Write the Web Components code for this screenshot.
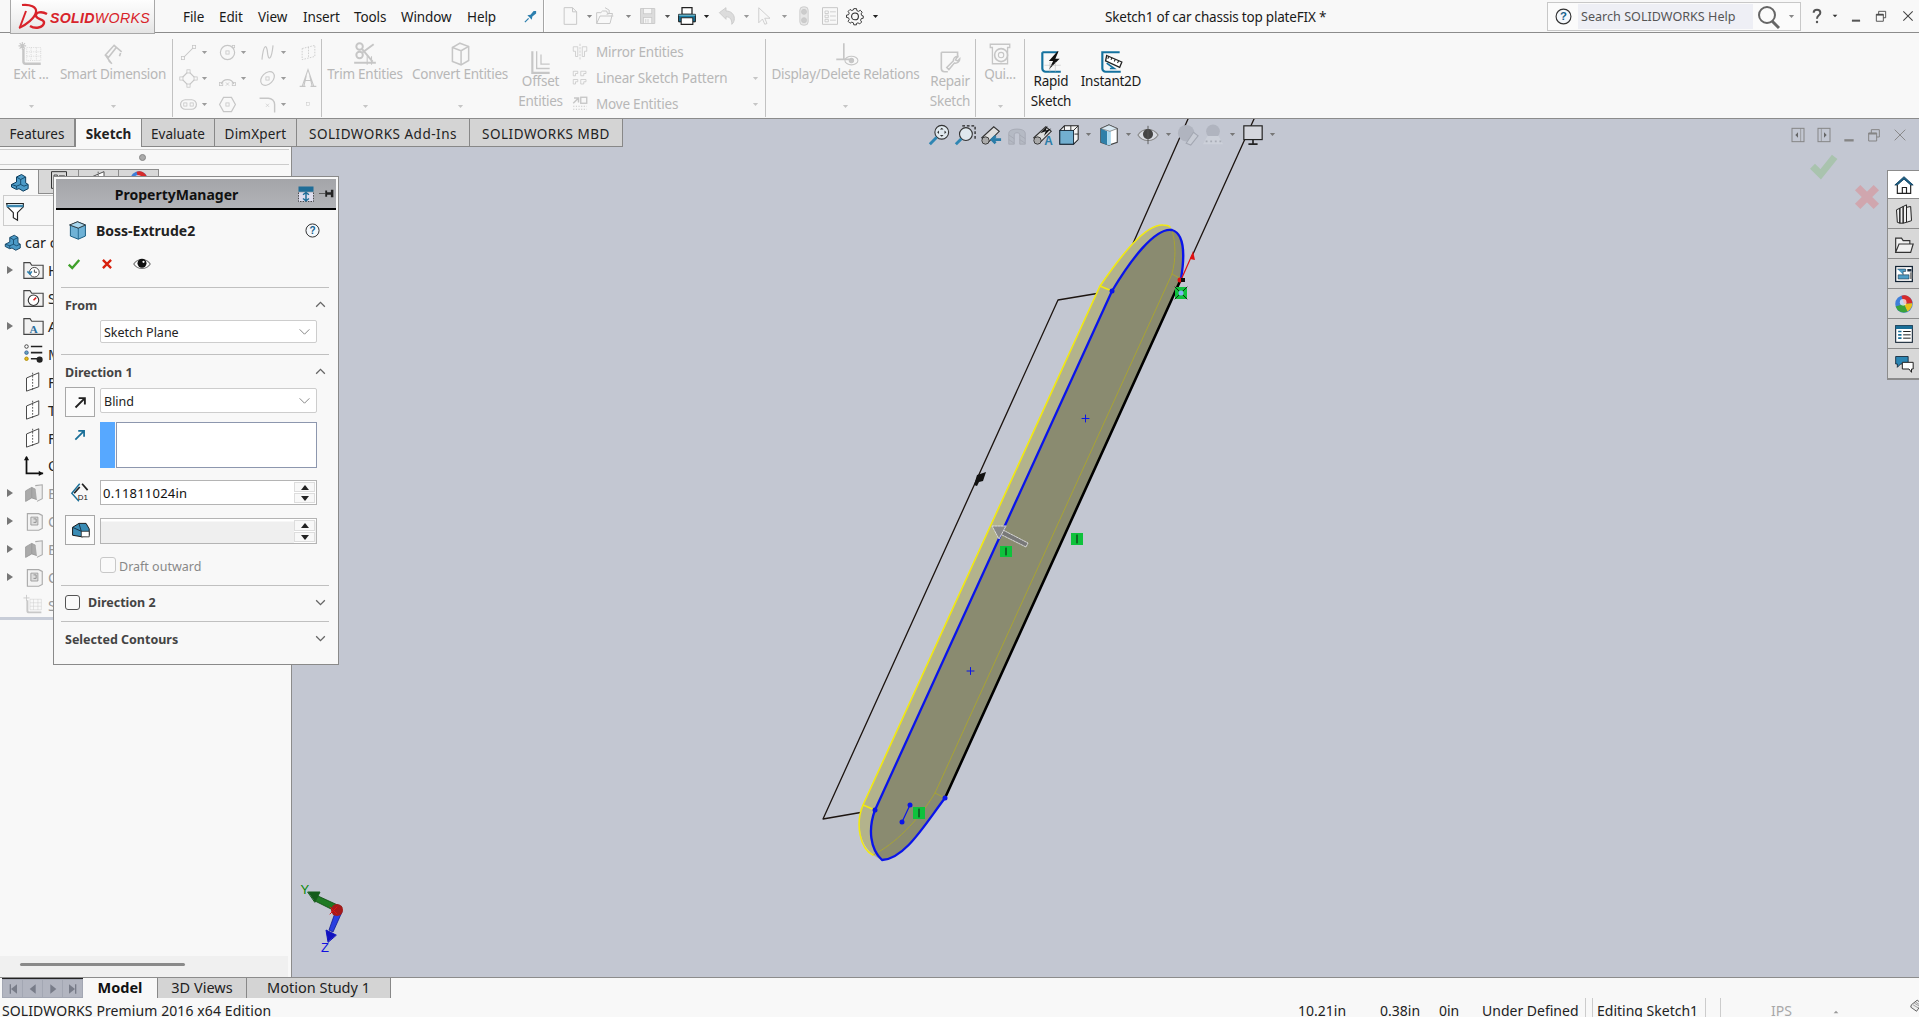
<!DOCTYPE html>
<html lang="en"><head><meta charset="utf-8"><title>SOLIDWORKS</title>
<style>
html,body{margin:0;padding:0;width:1919px;height:1017px;overflow:hidden;background:#f8f8f8}
body{font-family:"Noto Sans","Open Sans",sans-serif;font-size:13.5px;color:#222}
</style></head><body>
<sw-app></sw-app>
<script>
const D='#c6c6c6';
const ICONS={
caret:'<path d="M5 8h14l-7 8z" fill="currentColor" stroke="none"/>',
chevdown:'<path d="M4 8l8 8 8-8" stroke-width="2.4"/>',
chevup:'<path d="M4 16l8-8 8 8" stroke-width="2.4"/>',
chevthin:'<path d="M3 8l9 9 9-9" stroke-width="1.3"/>',
exit:'<path d="M5 7v12a2 2 0 0 0 2 2h14" stroke-width="2.2"/><path d="M8 6h13v12H8zM12 6v12M17 6v12M8 10h13M8 14h13" stroke-width=".5" stroke-dasharray="1 1"/><path d="M4 1v7M.5 4.500h7M1.500 2l5 5M6.500 2l-5 5" stroke-width="1"/>',
smart:'<path d="M5 13l8-9 2 2-7 9zM13 4l7 6M5 13l5 7" stroke-width="1.500"/><path d="M11 21l-3-3M19 11l-1 3" stroke-width="1.500"/>',
line:'<path d="M6 18L18 6" stroke-width="1.300"/><rect x="3" y="17" width="4" height="4"/><rect x="17" y="3" width="4" height="4"/>',
circle:'<circle cx="12" cy="12" r="9" stroke-width="1.500"/><rect x="10" y="10" width="4" height="4"/><rect x="18" y="3" width="3" height="3"/>',
spline:'<path d="M5 21C7 1 11 1 12 12s5 10 7-9" stroke-width="1.500"/>',
plane:'<path d="M4 7l16-4v14L4 21z" stroke-dasharray="2 1.500"/><path d="M12 5v14" stroke-dasharray="2 1.500"/>',
rect:'<path d="M3 12l9-9 9 9-9 9z" stroke-width="1.400"/><rect x="1" y="10" width="4" height="4" fill="#f8f8f8"/><rect x="19" y="10" width="4" height="4" fill="#f8f8f8"/><rect x="10" y="1" width="4" height="4" fill="#f8f8f8"/><rect x="10" y="19" width="4" height="4" fill="#f8f8f8"/>',
arc:'<path d="M4 19a8.500 8.500 0 0 1 16 0" stroke-width="1.500"/><rect x="2" y="17" width="4" height="4"/><rect x="18" y="17" width="4" height="4"/><path d="M10 17l4 4M14 17l-4 4"/>',
ellipse:'<ellipse cx="12" cy="12" rx="10" ry="7" transform="rotate(-45 12 12)" stroke-width="1.500"/><rect x="10" y="10" width="4" height="4"/>',
textA:'<path d="M2 22h7M15 22h7M5 22L12 2l7 20M8 15h8M10 9l-3 13M14 9l3 13" stroke-width="1.300"/>',
slot:'<rect x="2" y="6" width="20" height="12" rx="6" stroke-width="1.500"/><rect x="6" y="10" width="4" height="4"/><rect x="14" y="10" width="4" height="4"/>',
polygon:'<path d="M7 3h10l5 9-5 9H7l-5-9z" stroke-width="1.500"/><rect x="10" y="10" width="4" height="4"/>',
fillet:'<path d="M2 4h11a8 8 0 0 1 8 8v10" stroke-width="1.800"/><path d="M10 11l4 4M14 11l-4 4" stroke-width=".8"/>',
point:'<rect x="8" y="8" width="8" height="8" stroke-width="1.500"/>',
trim:'<circle cx="7" cy="5" r="3" stroke-width="1.800"/><circle cx="7" cy="13" r="3" stroke-width="1.800"/><path d="M9 7l10 12M9 11L20 3M2 20h20" stroke-width="1.800"/><path d="M14 14v8M18 14v8" stroke-width="1"/>',
convert:'<path d="M12 2l8 3v13l-7 4-8-3V6z" stroke-width="1.400"/><path d="M5 6l8 3v13M13 9l7-4" stroke-width="1.400"/>',
offset:'<path d="M4 2v20h16" stroke-width="2"/><path d="M8 2v16h12M12 5v9h8" stroke-width="1.200"/>',
mirror:'<path d="M12 1v22" stroke-dasharray="3 1.500"/><path d="M9 5H3v6h3v7h3zM15 5h6v6h-3v7h-3z"/>',
pattern:'<path d="M3 3h6v3H6v3H3zM13 3h7v3h-3v3h-4zM3 14h6v3H6v3H3zM13 14h7v3h-3v3h-4z"/>',
move:'<path d="M3 11l7-7M4 4h6v6" stroke-width="2"/><rect x="13" y="3" width="8" height="8" stroke-width="1.800"/><path d="M3 15h18M3 19h18" stroke-width="1.500" stroke-dasharray="1.500 2"/>',
relations:'<path d="M10 2v15M3 17h12" stroke-width="1.500"/><ellipse cx="17" cy="18" rx="6" ry="4"/><circle cx="17" cy="18" r="2" fill="currentColor"/>',
repair:'<path d="M4 3h15v5M4 3v15a3 3 0 0 0 3 3h3" stroke-width="1.500"/><path d="M21 9a4 4 0 0 1-5 4l-5 6-2-2 6-6a4 4 0 0 1 4-4l-2 3 2 1z" stroke-width="1.400"/>',
quick:'<path d="M3 3h18v3h-2v15H5V6H3z" stroke-width="1.200"/><circle cx="13" cy="13" r="6" stroke-width="1.500"/><circle cx="13" cy="13" r="2.500"/>',
rapid:'<path d="M4 3h14M4 3v15a3 3 0 0 0 3 3h14" stroke="#14719e" stroke-width="2"/><path d="M18 2l-8 9h4l-4 8 10-10h-4l3-7z" fill="#111" stroke="none"/><path d="M6 15h15M11 12v9M16 12v9" stroke="#bbb" stroke-width=".5"/>',
instant:'<path d="M20 3H4v15a3 3 0 0 0 3 3h14" stroke="#14719e" stroke-width="2"/><path d="M8 6l14 6-2 5-13-6z" fill="#fff" stroke="#222" stroke-width="1.200"/><path d="M10 7l-1 2M13 8l-1 2M16 9.500l-1 2M19 11l-1 2" stroke="#222" stroke-width="1"/><path d="M8 13l7 5h-4" stroke="#14719e" stroke-width="1.500"/>',
newdoc:'<path d="M5 2h10l5 5v15H5z" stroke-width="1.200"/><path d="M15 2v5h5" stroke-width="1.200"/>',
open:'<path d="M2 21V8h5l2-2h5l1 3h6l-3 12z" stroke-width="1.200"/><path d="M2 21l4-9h16" stroke-width="1.200"/><path d="M12 2l5 3v4l-3 1" stroke-width="1.200"/>',
save:'<path d="M2 2h19v20H2z" fill="#dcdcdc" stroke-width="1.200"/><rect x="6" y="2" width="11" height="7" fill="#f6f6f6"/><rect x="6" y="14" width="11" height="8" fill="#f6f6f6"/><path d="M9 16v5M12 16v5"/>',
print:'<path d="M6 2h12v8H6z" fill="#fff" stroke="#222" stroke-width="1.500"/><path d="M2 10h20v9H2z" fill="#1a7fa8" stroke="#111" stroke-width="1.200"/><path d="M5 14h14v8H5z" fill="#fff" stroke="#222" stroke-width="1.300"/><path d="M2 11h20" stroke="#7bc" stroke-width="1.500"/>',
undo:'<path d="M4 8l8-6v4c6 0 10 4 10 9 0 3-1 5-3 7 0-6-2-9-7-9v3z" fill="#dcdcdc" stroke-width="1"/>',
cursor:'<path d="M5 1v20l5-5 3 7 3-1-3-7h7z" stroke-width="1.100"/>',
traffic:'<rect x="7" y="1" width="10" height="22" rx="4" fill="#e6e6e6" stroke-width="1"/><circle cx="12" cy="7" r="3" fill="#ccc"/><circle cx="12" cy="17" r="3" fill="#ccc"/>',
optlist:'<path d="M3 2h18v20H3z" stroke-width="1.200"/><path d="M6 6h4v3H6zM6 11h4v3H6zM6 16h4v3H6zM12 7h7M12 12h7M12 17h7" stroke-width="1"/>',
gear:'<path d="M10 2h4l.6 3 2.400 1 2.600-1.600 2.800 2.800L20.800 9.800l1 2.400 2.200.6v3.400l-3 .6-1 2.400 1.600 2.600-2.800 2.800-2.600-1.600-2.400 1L14 26h-4l-.6-3-2.400-1-2.600 1.600-2.800-2.800L3.200 18l-1-2.400L-.8 15v-3.400l3-.6 1-2.400L1.600 6l2.800-2.800L7 4.800l2.400-1z" transform="translate(1.400 .4) scale(.9)" stroke="#222" stroke-width="1.300"/><circle cx="12" cy="12.500" r="4.500" stroke="#222" stroke-width="1.400"/>',
help:'<circle cx="12" cy="12" r="10.500" stroke="#333" stroke-width="1.600" fill="#f4f8fc"/><text x="12" y="17.500" font-size="16" font-weight="700" text-anchor="middle" fill="#14618e" stroke="none" font-family="Liberation Sans">?</text>',
search:'<circle cx="10" cy="10" r="8" stroke="#666" stroke-width="2"/><path d="M15 16l7 7" stroke="#666" stroke-width="3"/>',
qmark:'<path d="M7 7c0-6 10-6 10 0 0 4-5 4-5 9" stroke="#555" stroke-width="3"/><circle cx="12" cy="21" r="1.800" fill="#555" stroke="none"/>',
pin:'<path d="M21 3l-4 0 0 0-5 6-5 1 7 7 1-5 6-5z" fill="#2d7fae" stroke="none"/><path d="M3 21l6-6" stroke="#2d7fae" stroke-width="2"/>',
part:'<path d="M3 15l6-3V6l6-3 5 3v7l3 2v5l-6 3-5-3-3 1-6-3z" fill="#4b9ac7" stroke="#0e3e5e" stroke-width="1.200"/><path d="M9 6l5 3 6-3M14 9v6M3 15l6 2 5-2 4 2 5-2M9 17v3" stroke="#0e3e5e" stroke-width="1"/>',
filter:'<path d="M2 3h20v4l-7 7v9l-5-3v-6L3 7z" fill="#fff" stroke="#222" stroke-width="1.400"/><path d="M2 6h20" stroke="#3e88b0" stroke-width="3"/>',
hist:'<path d="M1 21V3h7l2 3h13v15z" fill="#f2f2f2" stroke="#444" stroke-width="1.300"/><circle cx="13" cy="14" r="5.500" fill="#fff" stroke="#333"/><path d="M13 11v3h3" stroke="#333"/><path d="M5 13l3 3 2-3" stroke="#2a80b0" stroke-width="1.800"/>',
sensor:'<path d="M1 21V3h7l2 3h13v15z" fill="#f2f2f2" stroke="#444" stroke-width="1.300"/><circle cx="12" cy="14" r="6" fill="#fff" stroke="#333" stroke-width="1.300"/><path d="M12 14l3-3" stroke="#d22" stroke-width="1.800"/>',
annot:'<path d="M1 21V3h7l2 3h13v15z" fill="#f2f2f2" stroke="#444" stroke-width="1.300"/><text x="12" y="19" font-size="13" font-weight="700" font-family="Liberation Serif" text-anchor="middle" fill="#2a6fa0" stroke="none">A</text>',
material:'<circle cx="4" cy="4" r="2" fill="#fff" stroke="#333"/><circle cx="4" cy="11" r="2" fill="#6ab" stroke="#359"/><circle cx="4" cy="18" r="2" fill="#e5b820" stroke="#a80"/><path d="M9 4h13M9 11h13M9 18h7" stroke="#222" stroke-width="1.800"/><circle cx="19" cy="19" r="3.500" fill="#222" stroke="none"/>',
plane2:'<path d="M4 8l14-6v16L4 23z" stroke="#444" stroke-width="1.100" fill="#fff"/><path d="M11 2v21" stroke="#444" stroke-dasharray="2 1.500"/>',
origin:'<path d="M4 2v19h19" stroke="#111" stroke-width="2"/><path d="M1 6l3-5 3 5zM18 18l5 3-5 3z" fill="#111" stroke="none"/>',
boss:'<path d="M3 9l7-4v12l-7 4zM10 5l6 3v11l-6-2" fill="#aaa" stroke="#999"/><path d="M14 3l8-1v16l-6 3" fill="#eee" stroke="#aaa" stroke-width="1.200"/>',
cut:'<path d="M5 3h13l4 2v15l-4 2H5z" fill="#f3f3f3" stroke="#aaa" stroke-width="1.300"/><path d="M9 7h8v9H9z" fill="#ddd" stroke="#999"/><path d="M12 9h3v4h-3" stroke="#888"/>',
sketch:'<path d="M5 7v12a2 2 0 0 0 2 2h14" stroke="#c8c8c8" stroke-width="2.200"/><path d="M8 6h13v12H8zM12 6v12M17 6v12M8 10h13M8 14h13" stroke="#c8c8c8" stroke-width=".5"/><path d="M4 1v7M.5 4.500h7" stroke="#c8c8c8"/>',
cube:'<path d="M12 1l10 4v14l-9 4-10-4V5z" fill="#6fb2d6" stroke="#145a80" stroke-width="1.200"/><path d="M2 5l11 4v14M13 9l9-4" stroke="#145a80" stroke-width="1"/><path d="M2 5l10-4 10 4-9 4z" fill="#a9d7ee"/>',
ok:'<path d="M3 13l6 6L21 5" stroke="#3fa02a" stroke-width="4"/>',
no:'<path d="M5 5l14 14M19 5L5 19" stroke="#d8200c" stroke-width="4"/>',
eye:'<path d="M1 12C6 4 18 4 23 12 18 20 6 20 1 12z" fill="#fff" stroke="#777" stroke-width="1.500"/><circle cx="12" cy="11" r="6" fill="#111" stroke="none"/><circle cx="14" cy="9" r="1.500" fill="#fff" stroke="none"/>',
pmdisplay:'<rect x="2" y="2" width="20" height="7" fill="#1f6d97" stroke="none"/><path d="M2 10v12h20V10" stroke="#222" stroke-dasharray="2 1.500" fill="#dde"/><path d="M12 10v11M8 13l4-3 4 3M8 18l4 3 4-3" stroke="#1f6d97" stroke-width="2"/>',
pushpin:'<path d="M0 12h10" stroke="#555" stroke-width="1.500"/><path d="M10 7h3v3h6V6h4v12h-4v-4h-6v3h-3z" fill="#222" stroke="none"/>',
revdir:'<path d="M4 20L19 5M9 5h10v10" stroke="#222" stroke-width="3"/>',
revdis:'<path d="M20 4L6 18M15 18H6V9" stroke="#c9c9c9" stroke-width="3"/>',
dirarrow:'<path d="M4 20L19 5M9 5h10v10" stroke="#1a6f98" stroke-width="3"/>',
depth:'<path d="M11 1L1 13l9 10" stroke="#1a6f98" stroke-width="1.800"/><path d="M4 13L11 5M14 1l7 8" stroke="#222" stroke-width="2.200"/><text x="15" y="21" font-size="10" text-anchor="middle" fill="#111" stroke="none" font-family="Liberation Sans">D1</text>',
draft:'<path d="M2 8l8-5h9l4 7v8l-9 2-12-2z" fill="#3a8cb5" stroke="#111" stroke-width="1.200"/><path d="M13 13h10v7H13z" fill="#fff" stroke="#222"/><path d="M10 3l3 10M2 8l11 5" stroke="#123" stroke-width="1"/>',
zoomfit:'<circle cx="15" cy="9" r="7.500" fill="#dfe8ee" stroke="#333" stroke-width="1.200"/><path d="M9.500 14.500L2 22" stroke="#2f86b3" stroke-width="3.200"/><path d="M15 4l-2 2h4zM15 14l-2-2h4zM10 9l2-2v4zM20 9l-2-2v4z" fill="#333" stroke="none"/>',
zoomarea:'<path d="M9 2h14v14" stroke="#222" stroke-dasharray="3 2" stroke-width="1.400"/><circle cx="13" cy="11" r="7" fill="#dfe8ee" stroke="#333" stroke-width="1.200"/><path d="M8 16l-6 6" stroke="#2f86b3" stroke-width="3.200"/>',
prevview:'<path d="M2 15L15 3l6 5-11 11z" fill="#ddd" stroke="#333" stroke-width="1.200"/><circle cx="6" cy="18" r="4" fill="#aaa" stroke="#333"/><path d="M23 17H13M17 13l-4 4 4 4" stroke="#2a7ca8" stroke-width="3"/>',
section:'<path d="M3 10c0-6 18-6 18 0v12h-6V11c0-2-6-2-6 0v11H3z" fill="#b5bac4" stroke="#a6aab5"/><path d="M3 12l6 4M3 17l6 4M15 12l6 4M15 17l6 4" stroke="#a6aab5"/>',
dynannot:'<path d="M2 15L15 3l6 5-11 11z" fill="#ddd" stroke="#333" stroke-width="1.200"/><circle cx="6" cy="18" r="4" fill="#aaa" stroke="#333"/><path d="M9 10l8-8-2 5 6-2-8 8 2-5z" fill="#111" stroke="none"/><text x="18" y="23" font-size="13" fill="#2a7ca8" stroke="none" font-family="Liberation Sans" font-weight="700" text-anchor="middle">A</text>',
orient:'<path d="M7 2h15v15l-5 5H2V7z" fill="#f5f5f5" stroke="#222" stroke-width="1.100"/><rect x="2" y="7" width="15" height="15" fill="#72afd0" stroke="#123"/><path d="M7 2v5M22 2l-5 5M14 2v5M18 11h4" stroke="#222"/>',
dispstyle:'<path d="M12 1l9 4v15l-9 3-9-3V5z" fill="#fff" stroke="#444" stroke-width="1.200"/><path d="M3 5l7 3v15l-7-3z" fill="#2f7fa8" stroke="none"/><path d="M10 8h4v15h-4z" fill="#a8d6ec" stroke="none"/><path d="M3 5l9-4 9 4-8 3z" fill="#d8e8f2" stroke="#444" stroke-width=".6"/>',
hideshow:'<path d="M1 12C6 4 18 4 23 12 18 20 6 20 1 12z" fill="#d8dbe2" stroke="#888" stroke-width="1.200"/><circle cx="12" cy="11" r="5.500" fill="#444" stroke="none"/><path d="M12 2v20" stroke="#555"/>',
appear:'<circle cx="10" cy="10" r="9" fill="#b0b4bf" stroke="none"/><path d="M10 21l8-12 5 4-8 10z" fill="#c8ccd5" stroke="#a3a7b2" stroke-width="1.200"/>',
scene:'<circle cx="12" cy="8" r="7.500" fill="#b0b4bf" stroke="none"/><path d="M1 22l5-9h12l5 9z" fill="#ccd0d9" stroke="none"/><path d="M4 18h2v2H4zM9 18h2v2H9zM14 18h2v2h-2zM19 18h2v2h-2z" fill="#a8acb6" stroke="none"/>',
monitor:'<rect x="2" y="2" width="20" height="15" fill="#d4d6dd" stroke="#222" stroke-width="1.300"/><path d="M12 17v4M7 22h10" stroke="#222" stroke-width="1.800"/>',
lpane:'<rect x="3" y="2" width="18" height="20" stroke="#858585" stroke-width="1.500"/><path d="M16 2v20" stroke="#858585"/><path d="M12 8v8l-4-4z" fill="#666" stroke="none"/>',
rpane:'<rect x="3" y="2" width="18" height="20" stroke="#858585" stroke-width="1.500"/><path d="M8 2v20" stroke="#858585"/><path d="M12 8v8l4-4z" fill="#666" stroke="none"/>',
vmin:'<path d="M5 20h14" stroke="#858585" stroke-width="3.500"/>',
vrest:'<path d="M4 9h12v12H4z" stroke="#858585" stroke-width="1.500"/><path d="M8 9V4h12v11h-4" stroke="#858585" stroke-width="1.500"/><path d="M4 10h12" stroke="#858585" stroke-width="2.500"/>',
vclose:'<path d="M4 4l16 16M20 4L4 20" stroke="#858585" stroke-width="1.400"/>',
wmin:'<path d="M5 20h14" stroke="#555" stroke-width="3.500"/>',
wrest:'<path d="M4 9h12v12H4z" stroke="#444" stroke-width="1.500"/><path d="M8 9V4h12v11h-4" stroke="#444" stroke-width="1.500"/><path d="M4 10h12" stroke="#444" stroke-width="2.500"/>',
wclose:'<path d="M4 4l16 16M20 4L4 20" stroke="#444" stroke-width="1.800"/>',
okbig:'<path d="M3 13l7 7L22 5" stroke="#a9c3ae" stroke-width="6"/>',
nobig:'<path d="M4 4l16 16M20 4L4 20" stroke="#d0a6ae" stroke-width="6.500"/>',
home:'<path d="M1 12L12 2l11 10-3 0L12 5 4 12z" fill="#1a5f85" stroke="#0e3e5e"/><path d="M4 12v10h16V12" stroke="#222" stroke-width="1.400" fill="#fff"/><path d="M10 22v-7h5v7" stroke="#222" stroke-width="1.400"/>',
library:'<path d="M3 7l4-2v18l-3-1zM7 5l4-2v20l-4 0zM11 3l4-2v21l-4 1zM15 4l5-1 1 17-6 2" fill="#eee" stroke="#222" stroke-width="1.200"/>',
folder:'<path d="M2 22V5h7l2 3h8v4H6l-4 10h18l3-10H6" fill="#f0f0f0" stroke="#333" stroke-width="1.400"/>',
board:'<rect x="2" y="3" width="20" height="18" fill="#fff" stroke="#123" stroke-width="1.500"/><path d="M4 6h10v3h-3v4h7v5H5v-5h6" fill="#4e9dc6" stroke="#123" stroke-width=".6"/><rect x="16" y="6" width="5" height="3" fill="#234" stroke="none"/><rect x="19" y="10" width="3" height="8" fill="#888" stroke="none"/>',
ball:'<circle cx="12" cy="12" r="10.500" fill="#3f7fd8" stroke="none"/><path d="M12 12L22 11A10 10 0 0 0 9 2z" fill="#d62b2b" stroke="none"/><path d="M12 12l10-1c0 5-3 8-6 10z" fill="#e9c21b" stroke="none"/><path d="M12 12l4 9a10 10 0 0 1-14-6z" fill="#3aa33a" stroke="none"/><circle cx="11" cy="10" r="4" fill="#fff" opacity=".7" stroke="none"/>',
props:'<rect x="2" y="2" width="20" height="20" fill="#fff" stroke="#123" stroke-width="1.300"/><rect x="2" y="2" width="20" height="4" fill="#1a6f98" stroke="none"/><path d="M5 9h4M5 13h4M5 17h4" stroke="#1a6f98" stroke-width="2"/><path d="M11 9h9M11 13h9M11 17h9" stroke="#222" stroke-width="1.200"/>',
chat:'<path d="M2 3h15v9H8l-4 4v-4H2z" fill="#2c86b3" stroke="#123"/><path d="M10 10h13v8h-2v4l-3-4h-8z" fill="#fff" stroke="#222" stroke-width="1.200"/>',
wreckbox:'<path d="M4 10L14 2l8 6-9 13L3 14z" fill="#eee" stroke="#444" stroke-width="1.400"/><path d="M7 10l10 6M9 7l10 6M11 5l9 6" stroke="#666"/>',
navfirst:'<path d="M8 5v14" stroke="#787c88" stroke-width="2"/><path d="M18 5v14L9 12z" fill="#787c88" stroke="none"/>',
navprev:'<path d="M16 5v14L7 12z" fill="#787c88" stroke="none"/>',
navnext:'<path d="M8 5v14l9-7z" fill="#787c88" stroke="none"/>',
navlast:'<path d="M16 5v14" stroke="#787c88" stroke-width="2"/><path d="M6 5v14l9-7z" fill="#787c88" stroke="none"/>'
};
function def(name,css,html,init){
  const t=document.createElement('template');
  t.innerHTML='<style>'+css+'</style>'+html;
  customElements.define(name,class extends HTMLElement{
    constructor(){super();this.attachShadow({mode:'open'}).appendChild(t.content.cloneNode(true));}
    connectedCallback(){if(init)init.call(this,this.shadowRoot);}
  });
}
customElements.define('sw-icon',class extends HTMLElement{
  static get observedAttributes(){return ['name','size'];}
  constructor(){super();this.attachShadow({mode:'open'});}
  attributeChangedCallback(){this.draw();}
  connectedCallback(){this.draw();}
  draw(){
    const s=this.getAttribute('size')||24,n=this.getAttribute('name');
    this.shadowRoot.innerHTML='<style>:host{display:inline-flex;flex:none;align-items:center;justify-content:center;width:'+s+'px;height:'+s+'px}svg{display:block;overflow:visible}</style><svg width="'+s+'" height="'+s+'" viewBox="0 0 24 24" fill="none" stroke="currentColor" stroke-width="1">'+(ICONS[n]||'')+'</svg>';
  }
});
def('sw-cell',':host{display:flex;flex:none;align-items:center;justify-content:center;height:100%}','<slot></slot>');

def('sw-logo',`:host{display:flex;align-items:center;width:143px;height:35px;flex:none;box-sizing:content-box;background:linear-gradient(#fff,#f1f1f1 60%,#e4e4e4);border:1px solid #a8a8a8;border-top:0;z-index:3;position:relative}
svg{margin-left:5px;flex:none}
span{font:italic 14.2px "Liberation Sans",sans-serif;color:#d8232a;margin-left:2px;margin-top:5px;white-space:nowrap;letter-spacing:.3px}
b{font-weight:700}`,
`<svg width="32" height="28" viewBox="0 0 32 28" fill="none" stroke="#d8232a"><path d="M6 3C14 2 21 5 20 10C19 16 10 23 3 26" stroke-width="2.200"/><path d="M10 9L4 25" stroke-width="2"/><path d="M31 12C26 9 19 10 20 14C21 18 29 17 28 21C27 26 19 27 14 24" stroke-width="2.400"/></svg><span><b>SOLID</b>WORKS</span>`);

def('sw-titlebar',`:host{display:flex;align-items:center;height:32px;border-bottom:1px solid #8c8c8c;background:#f8f8f8;padding-left:10px;position:relative;font-size:13.5px;color:#1a1a1a}
.m{display:flex;margin-left:28px;align-self:center;padding-top:2px}.m span{display:block;white-space:nowrap;letter-spacing:-.1px}
.sep{width:1px;height:32px;background:#a6a6a6;box-shadow:1px 0 0 #fff;flex:none}
.q{display:flex;height:100%;flex:none}
.t{margin-left:218px;white-space:nowrap;letter-spacing:-.2px;padding-top:2px}
.r{margin-left:auto;width:372px;flex:none;display:flex;height:100%;align-items:center}
.sb{width:252px;height:27px;border:1px solid #c8c8c8;display:flex;align-items:center;flex:none;background:#fbfbfb;margin-top:1px}
.sb .f{width:175px;height:25px;background:#eeeff5;margin-left:0;line-height:26px;padding-left:3px;box-sizing:border-box;color:#555;font-size:12.6px;white-space:nowrap;flex:none}
`,
`<sw-logo></sw-logo>
<div class="m"><span style="width:36px">File</span><span style="width:39px">Edit</span><span style="width:45px">View</span><span style="width:51px">Insert</span><span style="width:47px">Tools</span><span style="width:66px">Window</span><span style="width:50px">Help</span></div>
<sw-cell style="width:26px"><sw-icon name="pin" size="15"></sw-icon></sw-cell>
<div class="sep"></div>
<div class="q" style="color:#c8c8c8">
<sw-cell style="width:11px"></sw-cell>
<sw-cell style="width:30px"><sw-icon name="newdoc" size="20"></sw-icon></sw-cell>
<sw-cell style="width:8px"><sw-icon name="caret" size="9" style="color:#888"></sw-icon></sw-cell>
<sw-cell style="width:24px"><sw-icon name="open" size="20"></sw-icon></sw-cell>
<sw-cell style="width:22px"><sw-icon name="caret" size="9" style="color:#888"></sw-icon></sw-cell>
<sw-cell style="width:18px"><sw-icon name="save" size="18"></sw-icon></sw-cell>
<sw-cell style="width:20px"><sw-icon name="caret" size="9" style="color:#555"></sw-icon></sw-cell>
<sw-cell style="width:20px"><sw-icon name="print" size="20"></sw-icon></sw-cell>
<sw-cell style="width:18px"><sw-icon name="caret" size="9" style="color:#222"></sw-icon></sw-cell>
<sw-cell style="width:22px"><sw-icon name="undo" size="20"></sw-icon></sw-cell>
<sw-cell style="width:18px"><sw-icon name="caret" size="9" style="color:#999"></sw-icon></sw-cell>
<sw-cell style="width:18px"><sw-icon name="cursor" size="18"></sw-icon></sw-cell>
<sw-cell style="width:22px"><sw-icon name="caret" size="9" style="color:#999"></sw-icon></sw-cell>
<sw-cell style="width:18px"><sw-icon name="traffic" size="20"></sw-icon></sw-cell>
<sw-cell style="width:34px"><sw-icon name="optlist" size="20"></sw-icon></sw-cell>
<sw-cell style="width:16px"><sw-icon name="gear" size="18"></sw-icon></sw-cell>
<sw-cell style="width:24px"><sw-icon name="caret" size="9" style="color:#222"></sw-icon></sw-cell>
</div>
<span class="t">Sketch1 of car chassis top plateFIX *</span>
<div class="r"><div class="sb"><sw-cell style="width:30px"><sw-icon name="help" size="17"></sw-icon></sw-cell><div class="f">Search SOLIDWORKS Help</div><sw-cell style="width:31px"><sw-icon name="search" size="24"></sw-icon></sw-cell><sw-cell style="width:14px"><sw-icon name="caret" size="9" style="color:#888"></sw-icon></sw-cell></div>
<sw-cell style="width:24px;margin-left:4px"><sw-icon name="qmark" size="16"></sw-icon></sw-cell><sw-cell style="width:12px"><sw-icon name="caret" size="8" style="color:#333"></sw-icon></sw-cell><sw-cell style="width:29px"><sw-icon name="wmin" size="14"></sw-icon></sw-cell><sw-cell style="width:22px"><sw-icon name="wrest" size="14"></sw-icon></sw-cell><sw-cell style="width:22px;margin-left:5px"><sw-icon name="wclose" size="14"></sw-icon></sw-cell></div>`);

def('sw-rb-btn',`:host{display:flex;flex:none;flex-direction:column;align-items:center;height:86px;box-sizing:border-box;padding-top:8px;color:#b7b7b7;font-size:13.5px;line-height:19px;text-align:center;white-space:nowrap;overflow:visible;letter-spacing:-.25px}
:host([two]){padding-top:16px;line-height:20px}
:host([active]){color:#1a1a1a}
sw-icon{color:${D}}
.l{margin-top:-2px}:host([two]) .l{margin-top:-4px}
.c{position:relative;margin-top:auto;margin-bottom:9px;color:#9c9c9c;height:8px;display:flex;align-items:center}`,
`<sw-icon></sw-icon><div class="l"><slot></slot></div><div class="c"></div>`,
function(r){const i=r.querySelector('sw-icon');i.setAttribute('name',this.getAttribute('icon'));i.setAttribute('size',this.getAttribute('size')||26);
 if(this.hasAttribute('caret')){r.querySelector('.c').innerHTML='<sw-icon name="caret" size="9"></sw-icon>';}});

def('sw-rb-sep',':host{display:block;flex:none;width:1px;height:78px;background:#c2c2c2;margin-top:6px}','');

def('sw-rb-row',`:host{display:flex;align-items:center;height:26px;color:#b7b7b7;font-size:13.5px;white-space:nowrap;letter-spacing:-.2px}
sw-icon{color:${D};margin-left:0}.w{width:22px;display:flex;justify-content:center;flex:none}.e{margin-left:5px}.c{margin-left:auto;margin-right:5px;color:#9c9c9c;display:flex}`,
`<div class="w"><sw-icon size="18"></sw-icon></div><span class="e"><slot></slot></span><div class="c"></div>`,
function(r){r.querySelector('sw-icon').setAttribute('name',this.getAttribute('icon'));if(this.hasAttribute('caret'))r.querySelector('.c').innerHTML='<sw-icon name="caret" size="9"></sw-icon>';});

def('sw-ribbon',`:host{display:flex;height:86px;background:#f8f8f8;border-bottom:1px solid #8c8c8c;box-sizing:content-box;overflow:hidden}
.g{display:grid;grid-template-columns:39px 40px 41px 24px;grid-auto-rows:26px;align-items:center;width:148px;flex:none;box-sizing:border-box;padding:6px 0 0 3px;color:${D}}
.g div{display:flex;align-items:center;height:26px}
.g sw-icon.k{color:#9c9c9c}
.g sw-icon.i{width:24px}
.col{width:196px;flex:none;padding-top:6px}`,
`<sw-rb-btn icon="exit" caret style="width:62px">Exit ...</sw-rb-btn>
<sw-rb-btn icon="smart" caret style="width:102px">Smart Dimension</sw-rb-btn>
<div style="width:8px;flex:none"></div><sw-rb-sep></sw-rb-sep>
<div class="g">
<div><sw-icon name="line" size="19" class="i"></sw-icon><sw-icon name="caret" size="9" class="k"></sw-icon></div>
<div><sw-icon name="circle" size="19" class="i"></sw-icon><sw-icon name="caret" size="9" class="k"></sw-icon></div>
<div><sw-icon name="spline" size="19" class="i"></sw-icon><sw-icon name="caret" size="9" class="k"></sw-icon></div>
<div><sw-icon name="plane" size="19" class="i"></sw-icon></div>
<div><sw-icon name="rect" size="19" class="i"></sw-icon><sw-icon name="caret" size="9" class="k"></sw-icon></div>
<div><sw-icon name="arc" size="19" class="i"></sw-icon><sw-icon name="caret" size="9" class="k"></sw-icon></div>
<div><sw-icon name="ellipse" size="19" class="i"></sw-icon><sw-icon name="caret" size="9" class="k"></sw-icon></div>
<div><sw-icon name="textA" size="20" class="i"></sw-icon></div>
<div><sw-icon name="slot" size="19" class="i"></sw-icon><sw-icon name="caret" size="9" class="k"></sw-icon></div>
<div><sw-icon name="polygon" size="19" class="i"></sw-icon></div>
<div><sw-icon name="fillet" size="19" class="i"></sw-icon><sw-icon name="caret" size="9" class="k"></sw-icon></div>
<div><sw-icon name="point" size="8" class="i"></sw-icon></div>
</div><sw-rb-sep></sw-rb-sep>
<sw-rb-btn icon="trim" caret style="width:86px">Trim Entities</sw-rb-btn>
<sw-rb-btn icon="convert" caret style="width:104px">Convert Entities</sw-rb-btn>
<sw-rb-btn icon="offset" two style="width:57px">Offset<br>Entities</sw-rb-btn>
<div class="col"><sw-rb-row icon="mirror">Mirror Entities</sw-rb-row><sw-rb-row icon="pattern" caret>Linear Sketch Pattern</sw-rb-row><sw-rb-row icon="move" caret>Move Entities</sw-rb-row></div>
<sw-rb-sep></sw-rb-sep>
<sw-rb-btn icon="relations" caret style="width:159px">Display/Delete Relations</sw-rb-btn>
<sw-rb-btn icon="repair" two style="width:50px">Repair<br>Sketch</sw-rb-btn>
<sw-rb-sep></sw-rb-sep>
<sw-rb-btn icon="quick" caret style="width:48px">Qui...</sw-rb-btn>
<sw-rb-sep></sw-rb-sep>
<sw-rb-btn icon="rapid" two active style="width:52px">Rapid<br>Sketch</sw-rb-btn>
<sw-rb-btn icon="instant" two active style="width:68px">Instant2D</sw-rb-btn>`);

def('sw-tabs',`:host{display:flex;height:28px;font-size:13.5px;align-self:start;justify-self:start;z-index:2;box-sizing:border-box}
div{box-sizing:border-box;height:28px;line-height:30px;text-align:center;background:#d4d4d4;border-right:1px solid #888;border-bottom:1px solid #888;white-space:nowrap;color:#222;flex:none}
.a{background:#f8f8f8;font-weight:700;border-bottom:0;border-left:1px solid #888;color:#222}
.w{letter-spacing:.5px}`,
`<div style="width:75px">Features</div><div class="a" style="width:67px">Sketch</div><div style="width:73px">Evaluate</div><div style="width:82px;letter-spacing:.2px">DimXpert</div><div class="w" style="width:173px">SOLIDWORKS Add-Ins</div><div class="w" style="width:153px">SOLIDWORKS MBD</div>`);

def('sw-tree-row',`:host{display:flex;align-items:center;height:27.9px;font-size:14.5px;white-space:nowrap;color:#222}
:host([dim]){color:#9a9a9a}
.a{width:23px;flex:none;display:flex;box-sizing:border-box;padding-left:7px;color:#777}
.t{margin-left:4px}`,
`<div class="a"></div><sw-icon size="21"></sw-icon><span class="t"><slot></slot></span>`,
function(r){r.querySelector('sw-icon').setAttribute('name',this.getAttribute('icon'));if(this.hasAttribute('arrow'))r.querySelector('.a').innerHTML='<svg width="6" height="8"><path d="M0 0l6 4-6 4z" fill="#777"/></svg>';});

def('sw-left-panel',`:host{display:block;background:#f8f8f8;border-right:1px solid #8c8c8c;position:relative;grid-column:1;grid-row:2;box-sizing:border-box;width:292px;height:831px}
.grip{height:14px;margin-top:3px;border-top:1px solid #ccc;border-bottom:1px solid #ccc;width:289px;display:flex;align-items:center;justify-content:center;margin-bottom:4px}
.grip i{width:5px;height:5px;border-radius:50%;background:#aaa;border:1px solid #888;margin-left:-4px}
.tabs{display:flex;height:25px}.tabs div{width:40px;height:25px;box-sizing:border-box;background:#d8d8d8;border:1px solid #8c8c8c;border-left:0;display:flex;justify-content:center}
.tabs .a{background:#f8f8f8;border-bottom:0;width:39px;padding-top:2px}
.filter{margin:1px 0 0 3px;width:288px;height:31px;box-sizing:border-box;border:1px solid #ccc;display:flex;align-items:center;padding-left:1px}
.tree{overflow:hidden;height:393px;margin-top:1px;border-bottom:3px solid #c8cdd8;width:290px;box-sizing:border-box}
.car{display:flex;align-items:center;height:29px;padding-left:3px;font-size:14.5px;white-space:nowrap}
.car span{margin-left:4px}
.sb{position:absolute;left:0;right:3px;bottom:0;height:21px;background:#f0f0f0}.sb i{display:block;position:absolute;left:20px;top:7px;width:165px;height:3px;background:#8a8a8a;border-radius:2px}
sw-pm{position:absolute;left:53px;top:30px}`,
`<div class="grip"><i></i></div>
<div class="tabs"><div class="a"><sw-icon name="part" size="20"></sw-icon></div><div><sw-icon name="optlist" size="20" style="color:#333"></sw-icon></div><div><sw-icon name="plane2" size="20"></sw-icon></div><div><sw-icon name="ball" size="20"></sw-icon></div></div>
<div class="filter"><sw-icon name="filter" size="20"></sw-icon></div>
<div class="tree">
<div class="car"><sw-icon name="part" size="18"></sw-icon><span>car c</span></div>
<sw-tree-row icon="hist" arrow>H</sw-tree-row>
<sw-tree-row icon="sensor">S</sw-tree-row>
<sw-tree-row icon="annot" arrow>A</sw-tree-row>
<sw-tree-row icon="material">M</sw-tree-row>
<sw-tree-row icon="plane2">F</sw-tree-row>
<sw-tree-row icon="plane2">T</sw-tree-row>
<sw-tree-row icon="plane2">F</sw-tree-row>
<sw-tree-row icon="origin">O</sw-tree-row>
<sw-tree-row icon="boss" arrow dim>B</sw-tree-row>
<sw-tree-row icon="cut" arrow dim>C</sw-tree-row>
<sw-tree-row icon="boss" arrow dim>B</sw-tree-row>
<sw-tree-row icon="cut" arrow dim>C</sw-tree-row>
<sw-tree-row icon="sketch" dim>S</sw-tree-row>
</div>
<div class="sb"><i></i></div>
<sw-pm></sw-pm>`);

def('sw-select',`:host{display:flex;align-items:center;box-sizing:border-box;height:24px;border:1px solid #cdcdcd;border-radius:2px;background:#fff;padding:2px 5px 0 3px;font-size:12.5px;color:#222;white-space:nowrap}
sw-icon{margin-left:auto;color:#555;margin-top:-2px}`,`<span><slot></slot></span><sw-icon name="chevthin" size="13"></sw-icon>`);

def('sw-spin',`:host{display:flex;align-items:center;box-sizing:border-box;height:26px;border:1px solid #b4b4b4;background:#fff;font-size:13px;color:#111;padding-left:2px;position:relative;letter-spacing:.2px}
:host([off]){background:linear-gradient(#fff 2px,#efefef 3px);}
span{padding-top:1px}
.s{margin-left:auto;width:21px;height:100%;margin-right:1px;display:flex;flex-direction:column;gap:1px;padding:1px 0;box-sizing:border-box;flex:none;background:#fff}
.s div{flex:1;background:#f8f8f8;border:1px solid #ddd;display:flex;align-items:center;justify-content:center;box-sizing:border-box}
svg{display:block}`,
`<span><slot></slot></span><div class="s"><div><svg width="8" height="5"><path d="M0 5h8L4 0z" fill="#222"/></svg></div><div><svg width="8" height="5"><path d="M0 0h8L4 5z" fill="#222"/></svg></div></div>`);

def('sw-pm-section',`:host{display:block;margin:0 7px 0 5px;border-top:1px solid #c0c0c0}
.h{display:flex;align-items:center;font-weight:700;font-size:12.5px;color:#444;padding-left:4px;height:32px;white-space:nowrap}
.tt{padding-top:2px}
sw-icon{margin-left:auto;margin-right:2px;color:#666}
.cb{width:15px;height:15px;border:1px solid #555;border-radius:3px;margin-right:8px;display:none;box-sizing:border-box;background:#fbfbfb}
:host([check]) .cb{display:block}
:host([check]) .h{height:35px;padding-bottom:3px;box-sizing:border-box}
:host([check]) .tt{padding-top:0}
.b{padding-left:4px}`,
`<div class="h"><span class="cb"></span><span class="tt"></span><sw-icon size="13"></sw-icon></div><div class="b"><slot></slot></div>`,
function(r){r.querySelector('.tt').textContent=this.getAttribute('heading');r.querySelector('sw-icon').setAttribute('name',this.hasAttribute('open')?'chevup':'chevdown');});

def('sw-pm-btn',`:host{display:flex;align-items:center;justify-content:center;box-sizing:border-box;width:30px;height:30px;border:1px solid #a8a8a8;background:#fbfbfb}`,`<slot></slot>`);

def('sw-pm',`:host{display:block;box-sizing:border-box;width:286px;height:489px;border:1px solid #8a8a8a;background:#f8f8f8;padding:2px;z-index:4}
.hd{height:29px;background:linear-gradient(#a4a5a9,#b2b3b7);border-bottom:2px solid #000;display:flex;align-items:center;position:relative;font-weight:700;font-size:14px;color:#111;margin:0}
.hd b{display:block;width:241px;text-align:center;font-weight:700;padding-top:2px}
.hd sw-icon{flex:none}
.nm{display:flex;align-items:center;height:24px;margin-top:8px;padding-left:12px;font-weight:700;font-size:14px;color:#222}
.nm span{margin-left:9px;padding-top:1px}
.ac{display:flex;align-items:center;height:24px;margin-top:10px;padding-left:11px;gap:19px;margin-bottom:11px}
.g{display:grid;grid-template-columns:30px 217px;column-gap:5px;padding-bottom:12px}
.d{color:#888;font-size:12.5px;display:flex;align-items:center;height:16px}
.d i{display:block;width:16px;height:16px;box-sizing:border-box;border:1px solid #c8c8c8;border-radius:3px;background:#fafafa;margin-right:3px}
.d span{padding-top:2px}
.ic{display:flex;justify-content:center;align-items:center;box-sizing:border-box}
.sel{height:46px;display:flex;box-sizing:border-box}.sel i{display:block;width:15px;background:#57a8ff;margin-right:1px;flex:none}.sel div{flex:1;background:#fff;border:1px solid #8d97ae}`,
`<div class="hd"><b>PropertyManager</b><sw-icon name="pmdisplay" size="18"></sw-icon><sw-cell style="width:4px"></sw-cell><sw-icon name="pushpin" size="15"></sw-icon></div>
<div class="nm"><sw-icon name="cube" size="19"></sw-icon><span>Boss-Extrude2</span><sw-cell style="width:auto;margin-left:auto;margin-right:16px"><sw-icon name="help" size="15"></sw-icon></sw-cell></div>
<div class="ac"><sw-icon name="ok" size="14"></sw-icon><sw-icon name="no" size="14"></sw-icon><sw-icon name="eye" size="18"></sw-icon></div>
<sw-pm-section heading="From" open><div style="display:flex;padding:0 0 11px 35px"><sw-select style="width:217px;height:23px">Sketch Plane</sw-select></div></sw-pm-section>
<sw-pm-section heading="Direction 1" open><div class="g">
<sw-pm-btn><sw-icon name="revdir" size="15"></sw-icon></sw-pm-btn><sw-select style="height:25px;margin-top:1px">Blind</sw-select>
<div class="ic" style="margin-top:5px;height:46px;align-items:flex-start;padding-top:6px"><sw-icon name="dirarrow" size="14"></sw-icon></div><div class="sel" style="margin-top:5px"><i></i><div></div></div>
<div class="ic" style="margin-top:12px"><sw-icon name="depth" size="19"></sw-icon></div><sw-spin style="margin-top:12px;height:25px">0.11811024in</sw-spin>
<sw-pm-btn style="margin-top:10px"><sw-icon name="draft" size="19"></sw-icon></sw-pm-btn><sw-spin off style="margin-top:13px"></sw-spin>
<div></div><div class="d" style="margin-top:12px"><i></i><span>Draft outward</span></div>
</div></sw-pm-section>
<sw-pm-section heading="Direction 2" check></sw-pm-section>
<sw-pm-section heading="Selected Contours"></sw-pm-section>`);

def('sw-viewport',`:host{display:block;grid-column:2;grid-row:1/3;position:relative;background:#c3c7d2;overflow:hidden;width:1627px;height:858px}
svg.c{display:block;position:absolute;left:0;top:0}
.vb{position:absolute;left:634px;top:0;height:31px;display:flex;align-items:center}
.vc{position:absolute;top:0;right:0;height:31px;display:flex;align-items:center}
.task{position:absolute;right:0;top:51px;width:32px;border:1px solid #8c8c8c;border-right:0;box-sizing:border-box;background:#d8d8d8}
.task div{height:30px;border-bottom:1px solid #8c8c8c;box-sizing:border-box;display:flex;align-items:center;justify-content:center}
.task div:first-child{height:28px;background:#fff;}
.big{position:absolute}`,
`<svg class="c" width="1627" height="858" viewBox="292 120 1627 858" fill="none" stroke-linecap="round" stroke-linejoin="round">
<path d="M1188 120L1112 292M1254 120L1193 255M1112 292L1058 301L823 820L875 811" stroke="#1c1410" stroke-width="1.300"/>
<path d="M1100 287C1120 258 1145 225 1163 226C1168 226 1172 229 1172 231L882 861C860 852 855 825 863 806Z" fill="#b3b38c"/>
<path d="M1112 292L875 811C868 830 870 850 882 861C905 860 925 825 945 799L1181 280C1184 262 1186 235 1172 231C1155 228 1130 262 1112 292Z" fill="#8a8b70"/>
<path d="M1172 275C1176 260 1176 245 1172 231M1172 275L935 794C918 822 895 845 873 856M1172 275l9 5M935 794l10 5" stroke="#a8a434" stroke-width="1"/>
<path d="M1170 228C1168 226 1165 226 1163 226C1145 225 1120 258 1100 287L863 806C855 825 860 850 873 856M1100 287l12 5M863 806l12 5" stroke="#f2ea10" stroke-width="1.600"/>
<path d="M1181 280L945 799" stroke="#000" stroke-width="2.600"/>
<path d="M1112 292L875 811C868 830 870 850 882 861C905 860 925 825 945 799M1112 292C1130 262 1155 228 1172 231C1186 235 1184 262 1181 280" stroke="#0a14ea" stroke-width="2.300"/>
<path d="M910 806L902 823" stroke="#0a14ea" stroke-width="1.200"/>
<g fill="#0a14ea"><circle cx="1112" cy="292" r="2.500"/><circle cx="875" cy="811" r="2.500"/><circle cx="945" cy="799" r="2.500"/><circle cx="910" cy="806" r="2.500"/><circle cx="902" cy="823" r="2.500"/></g>
<path d="M1082 419.500h7M1085.500 416v7M967 672h7M970.500 668.500v7" stroke="#0a14ea" stroke-width="1"/>
<path d="M1181 281L1192 256" stroke="#e01010" stroke-width="1.200"/><path d="M1193 252l-3 8 5 1z" fill="#e01010"/><circle cx="1180" cy="281" r="2.500" fill="#e01010"/><rect x="1181" y="279" width="4" height="4" fill="#111"/>
<g><rect x="1175" y="288" width="12" height="12" fill="#0fc23c"/><path d="M1175 288l12 12M1187 288l-12 12" stroke="#111" stroke-width=".9"/><circle cx="1181" cy="294" r="2.500" fill="#7fb4f0"/></g>
<g><rect x="913" y="808" width="12" height="12" fill="#0fc23c"/><path d="M919 810v8" stroke="#111" stroke-width="1"/></g>
<g><rect x="1000" y="547" width="12" height="11" fill="#0fc23c"/><path d="M1006 549v7" stroke="#111" stroke-width="1"/></g>
<g><rect x="1071" y="534" width="12" height="12" fill="#0fc23c"/><path d="M1077 536v8" stroke="#111" stroke-width="1"/></g>
<path d="M974 486L977 476L986 473L983 482L979 483L977 487z" fill="#111"/>
<path d="M1003 531l25 13-2 4-26-13z" fill="#787878" stroke="#d8d8d8" stroke-width="1" stroke-dasharray="2 1"/>
<path d="M992 527h14l-7 13z" fill="#8a8a8a" stroke="#d8d8d8" stroke-width="1" stroke-dasharray="2 1"/>
<path d="M318 897L342 908L339 914L315 902z" fill="#1f7a24" stroke="#0d4a12" stroke-width=".8"/><path d="M308 893L320 893L315 903z" fill="#145c1a" stroke="#145c1a"/>
<path d="M342 913L333 933L329 931L336 911z" fill="#2a3fe0" stroke="#101a90" stroke-width=".8"/><path d="M328 943L326 931L336 936z" fill="#1212c0" stroke="#1212c0"/>
<circle cx="337" cy="911" r="6" fill="#a51a1a"/>
<path d="M330 908l7 7M337 908l-7 7" stroke="#e01010"/>
<text x="300.500" y="895" font-size="13" fill="#0b8a0b" font-family="Liberation Sans">Y</text>
<text x="321" y="953" font-size="13" fill="#1010e0" font-family="Liberation Sans">Z</text>
</svg>
<div class="vb" id="vb"></div>
<div class="vc"></div>
<sw-icon class="big" name="okbig" size="28" style="left:1517px;top:32px"></sw-icon>
<sw-icon class="big" name="nobig" size="28" style="left:1561px;top:64px"></sw-icon>
<div class="task"><div><sw-icon name="home" size="20"></sw-icon></div><div><sw-icon name="library" size="20"></sw-icon></div><div><sw-icon name="folder" size="20"></sw-icon></div><div><sw-icon name="board" size="20"></sw-icon></div><div><sw-icon name="ball" size="20"></sw-icon></div><div><sw-icon name="props" size="20"></sw-icon></div><div><sw-icon name="chat" size="20"></sw-icon></div></div>`,
function(r){
 const k=(w,h)=>`<sw-cell style="width:${w}px;height:24px">${h}</sw-cell>`;
 const ic=(n,w)=>k(w,`<sw-icon name="${n}" size="22"></sw-icon>`);
 const c=(w)=>k(w,`<sw-icon name="caret" size="9" style="color:#777"></sw-icon>`);
 r.querySelector('.vb').innerHTML=ic('zoomfit',25)+ic('zoomarea',27)+ic('prevview',26)+ic('section',26)+ic('dynannot',26)+ic('orient',26)+c(12)+ic('dispstyle',30)+c(8)+ic('hideshow',32)+c(8)+ic('appear',32)+ic('scene',18)+c(20)+ic('monitor',22)+c(16);
 r.querySelector('.vc').innerHTML=[['lpane',26],['rpane',26],['vmin',24],['vrest',26],['vclose',27]].map(a=>k(a[1],`<sw-icon name="${a[0]}" size="16"></sw-icon>`)).join('')+'<span style="width:5.500px"></span>';
});

def('sw-model-tabs',`:host{display:flex;height:20px;background:#f8f8f8;border-top:1px solid #8c8c8c;border-bottom:1px solid #8c8c8c;box-sizing:content-box;font-size:14.5px;margin-bottom:-1px}
.nav{display:flex;width:81px;margin-left:2px;background:#a3a7b3;box-sizing:border-box;flex:none;padding:1px;gap:1px;border-top:1px solid #222}.nav div{flex:1;background:#b2b5c0;display:flex;align-items:center;justify-content:center}
.t{box-sizing:border-box;text-align:center;line-height:19px;background:#d4d4d4;border-right:1px solid #888;white-space:nowrap;flex:none;color:#222}
.a{background:#f8f8f8;font-weight:700;color:#111}`,
`<div class="nav"><div><sw-icon name="navfirst" size="16"></sw-icon></div><div><sw-icon name="navprev" size="16"></sw-icon></div><div><sw-icon name="navnext" size="16"></sw-icon></div><div><sw-icon name="navlast" size="16"></sw-icon></div></div>
<div class="t a" style="width:75px">Model</div><div class="t" style="width:89px">3D Views</div><div class="t" style="width:144px">Motion Study 1</div>`);

def('sw-status',`:host{display:flex;height:19px;overflow:hidden;background:#f8f8f8;font-size:14px;color:#222;line-height:20px;padding-top:3px;box-sizing:border-box;white-space:nowrap;padding-left:2px}
.l{letter-spacing:.1px}
.r{margin-left:auto;display:flex}.r span{display:block;flex:none}
.s{width:1px;height:20px;background:#ccc;flex:none;margin-top:-3px}`,
`<span class="l">SOLIDWORKS Premium 2016 x64 Edition</span>
<div class="r"><span style="width:82px">10.21in</span><span style="width:59px">0.38in</span><span style="width:43px">0in</span><span style="width:103px">Under Defined</span><div class="s"></div><span style="width:6px"></span><div class="s"></div><span style="width:112px;padding-left:4px;box-sizing:border-box">Editing Sketch1</span><div class="s"></div><span style="width:14px"></span><div class="s"></div><span style="width:50px"></span><span style="width:61px;color:#a8a8a8">IPS</span><span style="width:77px;color:#999"><sw-icon name="caret" size="8" style="transform:rotate(180deg);margin-bottom:3px"></sw-icon></span><span style="width:10px;margin-top:-3px"><sw-icon name="wreckbox" size="14"></sw-icon></span></div>`);

def('sw-app',`:host{display:flex;flex-direction:column;width:1919px;height:1017px;overflow:hidden;background:#f8f8f8;position:relative}
.w{display:grid;grid-template-columns:292px 1627px;grid-template-rows:27px 831px;height:858px;flex:none}
sw-tabs{grid-column:1/-1;grid-row:1}`,
`<sw-titlebar></sw-titlebar><sw-ribbon></sw-ribbon>
<div class="w"><sw-viewport></sw-viewport><sw-tabs></sw-tabs><sw-left-panel></sw-left-panel></div>
<sw-model-tabs></sw-model-tabs><sw-status></sw-status>`);
</script>
</body></html>
